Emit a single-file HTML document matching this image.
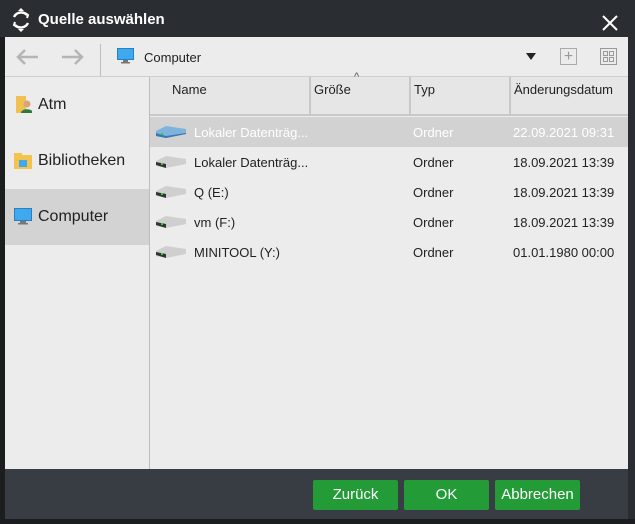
<!DOCTYPE html><html><head><meta charset="utf-8"><style>
body{margin:0;width:635px;height:524px;background:#1b1d1f;font-family:"Liberation Sans",sans-serif;position:relative;overflow:hidden}
.a{position:absolute}
.t{font-size:13px;color:#222}
</style></head><body>
<div class="a" style="left:0;top:0;width:635px;height:37px;background:#2a2e33"></div>
<svg class="a" style="left:9px;top:8px" width="24" height="24" viewBox="0 0 24 24" fill="none" stroke="#fff" stroke-width="2.4"><path d="M5 9a8 8 0 0 1 13-2M19 15a8 8 0 0 1-13 2"/><path d="M12 0l3 3h-6z M12 24l3-3h-6z" fill="#fff" stroke="none"/><path d="M16 5l3 2-1 3M8 19l-3-2 1-3" stroke-width="2"/></svg>
<div class="a" style="left:38px;top:11px;font-size:15px;font-weight:bold;color:#fff">Quelle auswählen</div>
<svg class="a" style="left:602px;top:15px" width="16" height="16"><path d="M1 1L15 15M15 1L1 15" stroke="#fff" stroke-width="2"/></svg>
<div class="a" style="left:5px;top:37px;width:625px;height:432px;background:#ececec"></div>
<svg class="a" style="left:16px;top:48px" width="74" height="18" stroke="#b5b5b5" stroke-width="2.5" fill="none"><path d="M22 9H2M9 2L2 9l7 7M46 9h20M59 2l7 7-7 7"/></svg>
<div class="a" style="left:100px;top:44px;width:1px;height:33px;background:#bdbdbd"></div>
<svg class="a" style="left:117px;top:48px" width="17" height="16"><rect x="0.5" y="0.5" width="16" height="11" fill="#3fa9f0" stroke="#2a7fc0"/><rect x="6" y="12" width="5" height="2" fill="#777"/><rect x="4" y="14" width="9" height="1.5" fill="#777"/></svg>
<div class="a t" style="left:144px;top:50px">Computer</div>
<div class="a" style="left:526px;top:53px;border:5px solid transparent;border-top:7px solid #222;border-bottom:0"></div>
<div class="a" style="left:560px;top:48px;width:15px;height:15px;border:1px solid #aaa;color:#999;font-size:16px;line-height:15px;text-align:center">+</div>
<svg class="a" style="left:600px;top:48px" width="17" height="17" fill="none" stroke="#999"><rect x=".5" y=".5" width="16" height="16"/><rect x="3.5" y="3.5" width="4" height="4"/><rect x="9.5" y="3.5" width="4" height="4"/><rect x="3.5" y="9.5" width="4" height="4"/><rect x="9.5" y="9.5" width="4" height="4"/></svg>
<div class="a" style="left:5px;top:76px;width:625px;height:1px;background:#cfcfcf"></div>
<div class="a" style="left:149px;top:77px;width:1px;height:392px;background:#bdbdbd"></div>
<div class="a" style="left:5px;top:189px;width:144px;height:56px;background:#d3d3d3"></div>
<svg class="a" style="left:16px;top:96px" width="16" height="18"><rect x="0" y="0" width="10" height="17" fill="#f0c050"/><circle cx="11" cy="8" r="3.5" fill="#d9a47a"/><path d="M5 17c0-5 12-5 12 0z" fill="#2e7a3d"/></svg>
<div class="a" style="left:38px;top:96px;font-size:16px;color:#222">Atm</div>
<svg class="a" style="left:14px;top:153px" width="18" height="16"><rect y="2" width="18" height="14" fill="#f5c34b"/><rect y="0" width="8" height="3" fill="#f5c34b"/><rect x="5" y="7" width="8" height="7" fill="#3fa9f0"/></svg>
<div class="a" style="left:38px;top:152px;font-size:16px;color:#222">Bibliotheken</div>
<svg class="a" style="left:14px;top:208px" width="18" height="17"><rect x="0.5" y="0.5" width="17" height="12" fill="#3fa9f0" stroke="#2a7fc0"/><rect x="6" y="13" width="6" height="2" fill="#777"/><rect x="4" y="15" width="10" height="1.5" fill="#777"/></svg>
<div class="a" style="left:38px;top:208px;font-size:16px;color:#222">Computer</div>
<div class="a" style="left:150px;top:77px;width:478px;height:39px;background:#e6e6e6;border-bottom:2px solid #c8c8c8;box-sizing:border-box"></div>
<div class="a" style="left:309px;top:77px;width:2px;height:39px;background:#c8c8c8"></div>
<div class="a" style="left:409px;top:77px;width:2px;height:39px;background:#c8c8c8"></div>
<div class="a" style="left:509px;top:77px;width:2px;height:39px;background:#c8c8c8"></div>
<div class="a t" style="left:172px;top:82px">Name</div>
<div class="a t" style="left:314px;top:82px">Größe</div>
<div class="a" style="left:354px;top:71px;font-size:11px;color:#555">^</div>
<div class="a t" style="left:414px;top:82px">Typ</div>
<div class="a t" style="left:514px;top:82px">Änderungsdatum</div>
<div class="a" style="left:628px;top:37px;width:7px;height:482px;background:#2a2e33"></div>
<div class="a" style="left:150px;top:117px;width:478px;height:30px;background:#d2d2d2"></div>
<svg class="a" style="left:156px;top:125px" width="30" height="13"><path d="M0 6l10-5 20 3v5l-20 4-10-2z" fill="#7eb3de"/><path d="M0 8l10 3 20-3v1l-20 4-10-2z" fill="#3a78b0"/><rect x="5" y="8" width="2" height="2" fill="#3c3"/></svg>
<div class="a t" style="left:194px;top:125px;color:#fff">Lokaler Datenträg...</div>
<div class="a t" style="left:413px;top:125px;color:#fff">Ordner</div>
<div class="a t" style="left:513px;top:125px;color:#fff">22.09.2021 09:31</div>
<div id="rows"></div>
<script>
var d=[["Lokaler Datenträg...","18.09.2021 13:39"],["Q (E:)","18.09.2021 13:39"],["vm (F:)","18.09.2021 13:39"],["MINITOOL (Y:)","01.01.1980 00:00"]],h="";
d.forEach(function(r,i){var y=155+30*i;
h+='<svg class="a" style="left:156px;top:'+(y)+'px" width="30" height="13"><path d="M0 6l10-5 20 3v5l-20 4-10-2z" fill="#cfcfcf"/><path d="M0 7l10 2 0 4-10-3z" fill="#333"/><rect x="5" y="8" width="2" height="2" fill="#3c3"/></svg>';
h+='<div class="a t" style="left:194px;top:'+y+'px">'+r[0]+'</div><div class="a t" style="left:413px;top:'+y+'px">Ordner</div><div class="a t" style="left:513px;top:'+y+'px">'+r[1]+'</div>';});
document.getElementById("rows").innerHTML=h;
</script>
<div class="a" style="left:5px;top:469px;width:623px;height:50px;background:#373d42"></div>
<div class="a" style="left:313px;top:480px;width:85px;height:30px;background:#239b37;border-radius:2px;color:#fff;font-size:15px;line-height:30px;text-align:center">Zurück</div>
<div class="a" style="left:404px;top:480px;width:85px;height:30px;background:#239b37;border-radius:2px;color:#fff;font-size:15px;line-height:30px;text-align:center">OK</div>
<div class="a" style="left:495px;top:480px;width:85px;height:30px;background:#239b37;border-radius:2px;color:#fff;font-size:15px;line-height:30px;text-align:center">Abbrechen</div>
</body></html>
